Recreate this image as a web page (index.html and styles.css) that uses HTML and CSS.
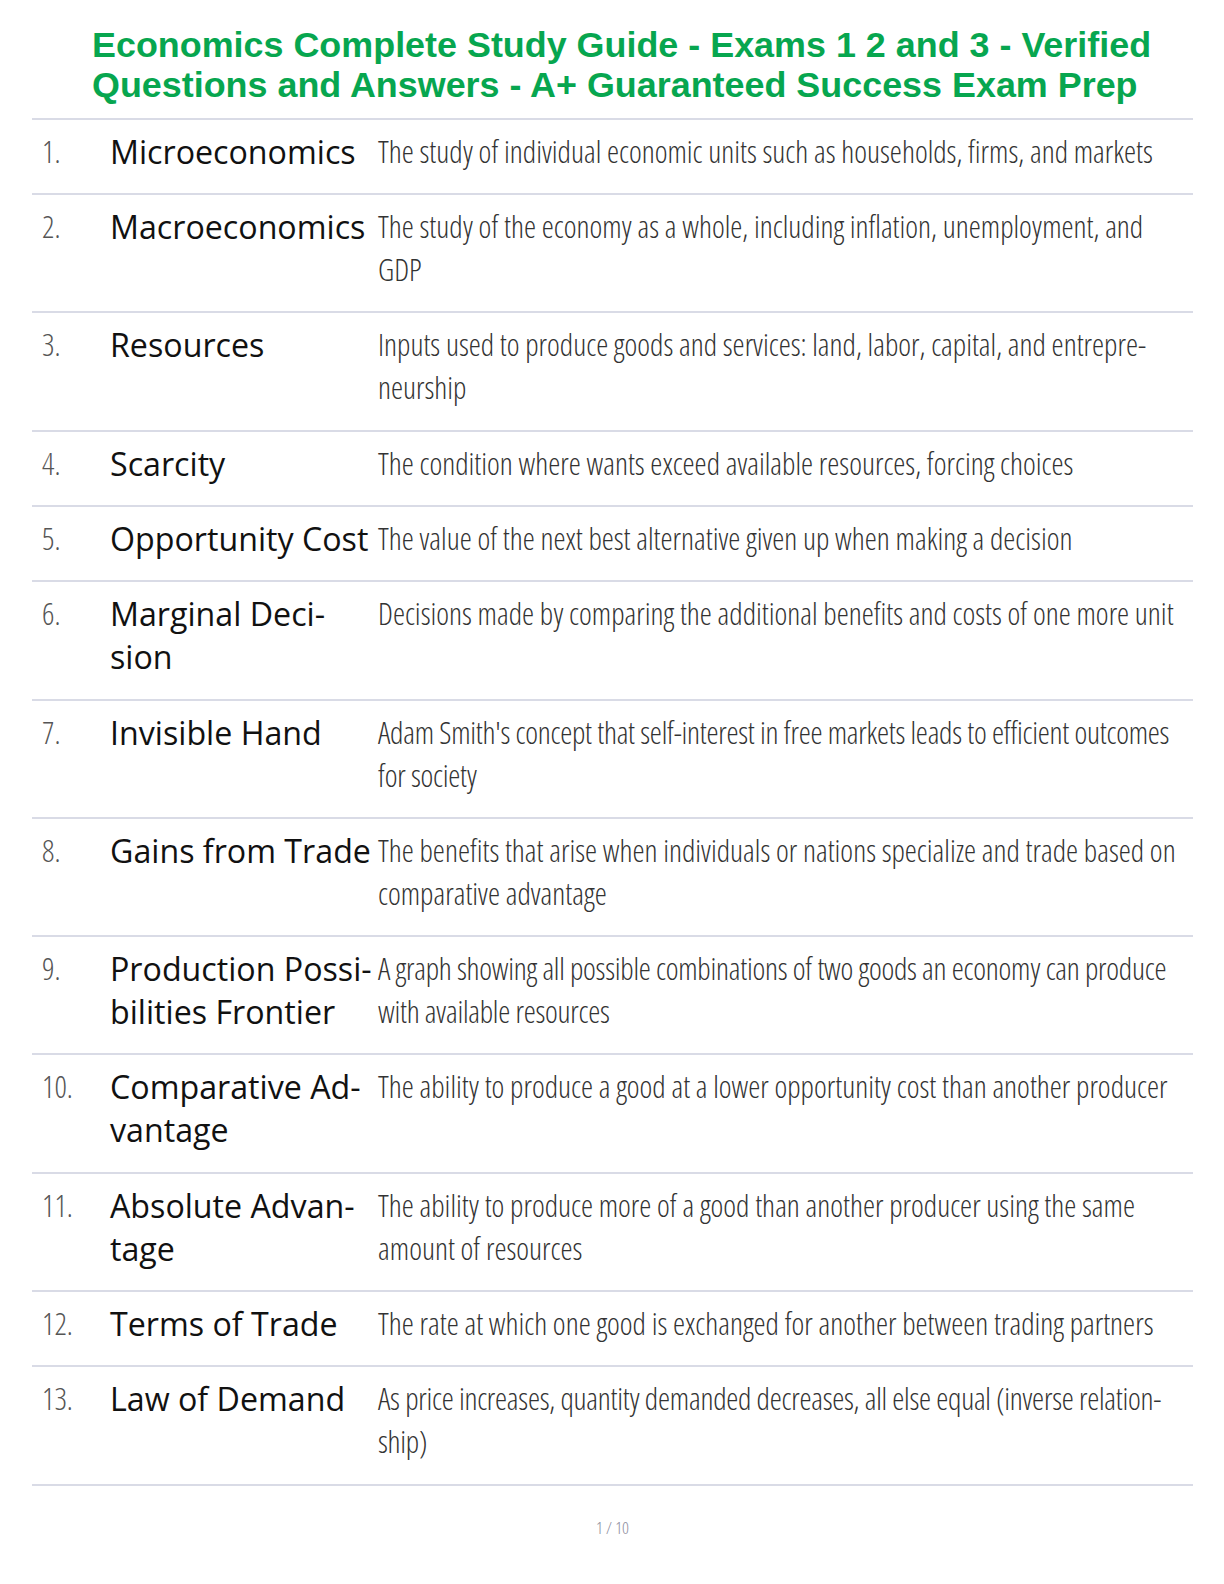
FILE: index.html
```html
<!DOCTYPE html>
<html lang="en">
<head>
<meta charset="utf-8">
<title>Economics Complete Study Guide</title>
<link rel="stylesheet" href="styles.css">
</head>
<body>
<div class="page">
  <h1 class="title">Economics Complete Study Guide - Exams 1 2 and 3 - Verified Questions and Answers - A+ Guaranteed Success Exam Prep</h1>
  <div class="list">
    <div class="row"><div class="num">1.</div><div class="term">Microeconomics</div><div class="def">The study of individual economic units such as households, firms, and markets</div></div>
    <div class="row"><div class="num">2.</div><div class="term">Macroeconomics</div><div class="def">The study of the economy as a whole, including inflation, unemployment, and GDP</div></div>
    <div class="row"><div class="num">3.</div><div class="term">Resources</div><div class="def">Inputs used to produce goods and services: land, labor, capital, and entrepre&shy;neurship</div></div>
    <div class="row"><div class="num">4.</div><div class="term">Scarcity</div><div class="def">The condition where wants exceed available resources, forcing choices</div></div>
    <div class="row"><div class="num">5.</div><div class="term">Opportunity Cost</div><div class="def">The value of the next best alternative given up when making a decision</div></div>
    <div class="row"><div class="num">6.</div><div class="term">Marginal Deci&shy;sion</div><div class="def">Decisions made by comparing the additional benefits and costs of one more unit</div></div>
    <div class="row"><div class="num">7.</div><div class="term">Invisible Hand</div><div class="def tight">Adam Smith's concept that self-interest in free markets leads to efficient outcomes for society</div></div>
    <div class="row"><div class="num">8.</div><div class="term">Gains from Trade</div><div class="def">The benefits that arise when individuals or nations specialize and trade based on comparative advantage</div></div>
    <div class="row"><div class="num">9.</div><div class="term">Production Possi&shy;bilities Frontier</div><div class="def tight">A graph showing all possible combinations of two goods an economy can produce with available resources</div></div>
    <div class="row"><div class="num">10.</div><div class="term">Comparative Ad&shy;vantage</div><div class="def">The ability to produce a good at a lower opportunity cost than another producer</div></div>
    <div class="row"><div class="num">11.</div><div class="term">Absolute Advan&shy;tage</div><div class="def">The ability to produce more of a good than another producer using the same amount of resources</div></div>
    <div class="row"><div class="num">12.</div><div class="term">Terms of Trade</div><div class="def">The rate at which one good is exchanged for another between trading partners</div></div>
    <div class="row"><div class="num">13.</div><div class="term">Law of Demand</div><div class="def tight">As price increases, quantity demanded decreases, all else equal (inverse relation&shy;ship)</div></div>
  </div>
  <div class="pager">1 / 10</div>
</div>
</body>
</html>
```
FILE: styles.css
```css
html, body {
  margin: 0;
  padding: 0;
  background: #ffffff;
}
.page {
  width: 1161px;
  padding: 25px 0 0 32px;
}
.title {
  margin: 0 0 12px 0;
  padding: 0 20px 0 60px;
  text-align: left;
  font-family: "Liberation Sans", Arial, sans-serif;
  font-weight: 700;
  font-size: 35.9px;
  line-height: 40.4px;
  color: #07a64f;
}
.list {
  border-bottom: 2px solid #d9dbe6;
}
.row {
  display: grid;
  grid-template-columns: 68px 268px 1fr;
  padding: 10px 12px 20.3px 10px;
  border-top: 2px solid #d9dbe6;
  line-height: 43px;
}
.num, .def {
  font-family: "Open Sans", sans-serif;
  font-stretch: 75%;
  font-weight: 300;
  font-size: 30.5px;
}
.num {
  color: #555555;
}
.def {
  color: #333333;
}
.def.tight {
  letter-spacing: -0.25px;
}
.term {
  padding-right: 5px;
  font-family: "Open Sans", sans-serif;
  font-weight: 500;
  font-size: 32.2px;
  color: #111111;
}
.pager {
  margin-top: 30px;
  text-align: center;
  font-family: "Open Sans", sans-serif;
  font-stretch: 75%;
  font-weight: 300;
  font-size: 17px;
  color: #8c8c9c;
}
```
